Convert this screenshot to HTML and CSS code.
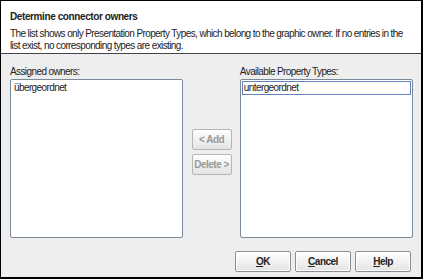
FILE: index.html
```html
<!DOCTYPE html>
<html lang="en">
<head>
    <meta charset="UTF-8">
    <meta name="viewport" content="width=device-width, initial-scale=1.0">
    <title>Determine connector owners</title>
    <link rel="stylesheet" href="styles.css">
</head>
<body>
    <div class="dialog">
        <div class="header">
            <div class="title">Determine connector owners</div>
            <div class="desc">The list shows only Presentation Property Types, which belong to the graphic owner. If no entries in the list exist, no corresponding types are existing.</div>
        </div>
        <div class="content">
            <div class="lists">
                <div class="column">
                    <div class="label">Assigned owners:</div>
                    <div class="listbox">
                        <div class="item">übergeordnet</div>
                    </div>
                </div>
                <div class="middle">
                    <button class="btn small" disabled>&lt; Add</button>
                    <button class="btn small" disabled>Delete &gt;</button>
                </div>
                <div class="column">
                    <div class="label">Available Property Types:</div>
                    <div class="listbox">
                        <div class="item focused">untergeordnet</div>
                    </div>
                </div>
            </div>
            <div class="actions">
                <button class="btn main"><u>O</u>K</button>
                <button class="btn main"><u>C</u>ancel</button>
                <button class="btn main"><u>H</u>elp</button>
            </div>
        </div>
    </div>
</body>
</html>
```

FILE: styles.css
```css
body {
    margin: 0;
    font-family: "Liberation Sans", Arial, sans-serif;
    font-size: 10px;
    letter-spacing: -0.6px;
    color: #222;
}
.dialog {
    width: 423px;
    height: 279px;
    box-sizing: border-box;
    border: 1px solid #000;
    border-right-width: 2px;
    border-bottom-width: 2px;
    background-color: #eeeeee;
    display: flex;
    flex-direction: column;
}
.header {
    background-color: #fff;
    height: 53px;
    box-sizing: border-box;
    border-bottom: 1px solid #444;
    padding: 9px 8px 0 9px;
}
.title {
    font-weight: bold;
    letter-spacing: -0.4px;
    line-height: 13px;
    margin-bottom: 5px;
}
.desc {
    line-height: 12px;
}
.content {
    flex: 1;
    display: flex;
    flex-direction: column;
    padding: 11px 8px 0 9px;
}
.lists {
    display: flex;
}
.column {
    width: 174px;
    display: flex;
    flex-direction: column;
}
.label {
    line-height: 14px;
}
.listbox {
    height: 159px;
    box-sizing: border-box;
    background-color: #fff;
    border: 1px solid #7a8a99;
    border-radius: 2px;
    padding: 1px;
}
.item {
    line-height: 12px;
    padding-left: 1px;
    border: 1px solid transparent;
}
.item.focused {
    border-color: #6382bf;
}
.middle {
    width: 57px;
    display: flex;
    flex-direction: column;
    align-items: center;
    gap: 4px;
    padding-top: 64px;
}
.btn {
    font-family: "Liberation Sans", Arial, sans-serif;
    font-size: 10px;
    font-weight: bold;
    letter-spacing: -0.5px;
    white-space: nowrap;
    color: #222;
    background: linear-gradient(#ffffff, #e4e4e4);
    border: 1px solid #8a8f94;
    border-radius: 2px;
    padding: 0;
    box-sizing: border-box;
}
.btn.small {
    width: 40px;
    height: 21px;
    color: #999;
    border-color: #b5b5b5;
}
.actions {
    display: flex;
    justify-content: flex-end;
    gap: 4px;
    margin-top: 13px;
    padding-right: 2px;
}
.btn.main {
    width: 56px;
    height: 21px;
    box-shadow: inset 0 0 0 1px #fff;
}
```
